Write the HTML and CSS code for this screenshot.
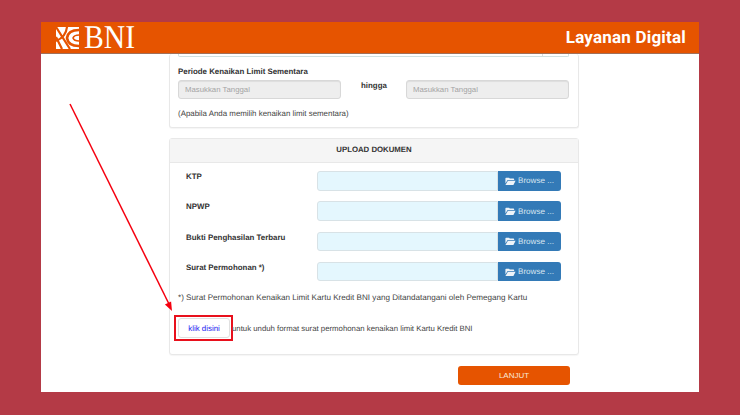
FILE: index.html
```html
<!DOCTYPE html>
<html lang="id">
<head>
<meta charset="utf-8">
<title>BNI Layanan Digital</title>
<link rel="stylesheet" href="styles.css">
</head>
<body>
<main class="window">
  <header class="topbar">
    <div class="brand">
      <svg class="logo" width="23" height="22" viewBox="0 0 23 22" aria-hidden="true">
        <rect width="23" height="22" fill="#fff"/>
        <path d="M0 0 L14 22 M11 0 Q10 10 0 14 M0 10 L6 22" fill="none" stroke="#e65400" stroke-width="2.2"/>
        <path d="M23 3 Q12 3 11 11 Q12 19 23 19" fill="none" stroke="#e65400" stroke-width="2.6"/>
        <path d="M23 8 Q18 8 17 11 Q18 14 23 14" fill="none" stroke="#e65400" stroke-width="1.6"/>
      </svg>
      <span class="wordmark">BNI</span>
    </div>
    <div class="title">Layanan Digital</div>
  </header>
  <div class="content">
    <section class="panel panel-top">
      <div class="stub"><span class="stub-end"></span></div>
      <div class="label period-label">Periode Kenaikan Limit Sementara</div>
      <div class="date-row">
        <input class="date" placeholder="Masukkan Tanggal" disabled>
        <span class="label until">hingga</span>
        <input class="date" placeholder="Masukkan Tanggal" disabled>
      </div>
      <p class="hint">(Apabila Anda memilih kenaikan limit sementara)</p>
    </section>
    <section class="panel panel-upload">
      <div class="panel-head">UPLOAD DOKUMEN</div>
      <div class="panel-body">
        <div class="file-row">
          <span class="label">KTP</span>
          <div class="file"><span class="file-input"></span><span class="browse"><svg class="folder" width="11" height="8" viewBox="0 0 14 11"><path d="M0 2 Q0 1 1 1 H5 L6 2 H11 Q12 2 12 3 V4 H3 L0 9 Z M3.500 5 H14 L11 11 H0 Z" fill="#eef3f8"/></svg>Browse ...</span></div>
        </div>
        <div class="file-row">
          <span class="label">NPWP</span>
          <div class="file"><span class="file-input"></span><span class="browse"><svg class="folder" width="11" height="8" viewBox="0 0 14 11"><path d="M0 2 Q0 1 1 1 H5 L6 2 H11 Q12 2 12 3 V4 H3 L0 9 Z M3.500 5 H14 L11 11 H0 Z" fill="#eef3f8"/></svg>Browse ...</span></div>
        </div>
        <div class="file-row">
          <span class="label">Bukti Penghasilan Terbaru</span>
          <div class="file"><span class="file-input"></span><span class="browse"><svg class="folder" width="11" height="8" viewBox="0 0 14 11"><path d="M0 2 Q0 1 1 1 H5 L6 2 H11 Q12 2 12 3 V4 H3 L0 9 Z M3.500 5 H14 L11 11 H0 Z" fill="#eef3f8"/></svg>Browse ...</span></div>
        </div>
        <div class="file-row">
          <span class="label">Surat Permohonan *)</span>
          <div class="file"><span class="file-input"></span><span class="browse"><svg class="folder" width="11" height="8" viewBox="0 0 14 11"><path d="M0 2 Q0 1 1 1 H5 L6 2 H11 Q12 2 12 3 V4 H3 L0 9 Z M3.500 5 H14 L11 11 H0 Z" fill="#eef3f8"/></svg>Browse ...</span></div>
        </div>
        <p class="note">*) Surat Permohonan Kenaikan Limit Kartu Kredit BNI yang Ditandatangani oleh Pemegang Kartu</p>
        <div class="download">
          <span class="red-box"><a class="klik">klik disini</a></span>
          <span class="download-text">untuk unduh format surat permohonan kenaikan limit Kartu Kredit BNI</span>
        </div>
      </div>
    </section>
    <div class="actions"><button class="next">LANJUT</button></div>
  </div>
  <svg class="arrow" width="120" height="220" viewBox="0 0 120 220" aria-hidden="true">
    <path d="M1 1 L100 201" stroke="#f5000f" stroke-width="1.5" fill="none"/>
    <path d="M103 208 L95.900 201.500 L102.100 198.500 Z" fill="#f5000f"/>
  </svg>
</main>
</body>
</html>
```
FILE: styles.css
```css
* { box-sizing: border-box; }
html, body { margin: 0; height: 100%; }
body {
  background: #b43a46;
  padding: 22px 41px 23px;
  font-family: "Liberation Sans", Arial, sans-serif;
  text-rendering: geometricPrecision;
  overflow: hidden;
}
.window {
  position: relative;
  width: 658px;
  height: 370px;
  background: #fff;
}
.topbar {
  height: 32px;
  background: #e65400;
  border-bottom: 1px solid #a0705a;
  display: flex;
  align-items: center;
  justify-content: space-between;
  padding: 0 13px 0 15px;
  position: relative;
  z-index: 1;
}
.brand { display: flex; align-items: center; gap: 5px; }
.logo { display: block; }
.wordmark {
  font-family: "Liberation Serif", serif;
  color: #fff;
  font-size: 26px;
  line-height: 31px;
  transform: scale(1.14, 1.28);
  transform-origin: left center;
}
.title {
  color: #fff;
  font-family: Roboto, sans-serif;
  font-weight: 700;
  font-size: 17px;
  letter-spacing: 0.2px;
}
.content {
  width: 410px;
  margin-left: 128px;
  display: flex;
  flex-direction: column;
}
.panel {
  background: #fff;
  border: 1px solid #e8e8e8;
  border-radius: 3px;
  box-shadow: 0 1px 1px rgba(0,0,0,.04);
}
.panel-top {
  height: 74px;
  border-top: 0;
  padding: 0 9px 0 8px;
}
.stub {
  height: 3px;
  border: 1px solid #cfe0e0;
  border-top: 0;
  border-radius: 0 0 2px 2px;
  display: flex;
  justify-content: flex-end;
}
.stub-end { width: 26px; border-left: 1px solid #ddd; }
.label {
  font-size: 7.900px;
  font-weight: 700;
  color: #333;
}
.period-label { margin-top: 9px; line-height: 11px; }
.date-row {
  margin-top: 3px;
  display: flex;
  align-items: center;
}
.date {
  width: 163px;
  height: 19px;
  border: 1px solid #d8d8d8;
  border-radius: 3px;
  background: #eee;
  padding: 0 6px;
  font: 7.800px "Liberation Sans", Arial, sans-serif;
  box-shadow: inset 0 1px 1px rgba(0,0,0,.07);
}
.date::placeholder { color: #a4a4a4; opacity: 1; }
.until { width: 65px; padding-left: 20px; margin-top: -9px; }
.hint {
  margin: 9px 0 0;
  font-size: 7.900px;
  line-height: 11px;
  color: #444;
}
.panel-upload { margin-top: 10px; height: 217px; }
.panel-head {
  height: 24px;
  padding-bottom: 2px;
  background: #f5f5f5;
  border-bottom: 1px solid #e8e8e8;
  display: flex;
  align-items: center;
  justify-content: center;
  font-size: 7.800px;
  font-weight: 700;
  color: #333;
}
.panel-body { padding: 8px 8px 0; }
.file-row {
  height: 30.330px;
  display: flex;
  align-items: flex-start;
  padding-left: 8px;
}
.file-row .label { width: 131px; line-height: 11px; }
.file { display: flex; width: 244px; height: 19.500px; }
.file-input {
  flex: 1;
  background: #e4f7fe;
  border: 1px solid #d8e2e6;
  border-radius: 3px 0 0 3px;
}
.browse {
  width: 63px;
  background: #337ab7;
  border-radius: 0 3px 3px 0;
  color: #dbe6f0;
  font-size: 8.100px;
  display: flex;
  align-items: center;
  justify-content: center;
  gap: 2px;
}
.folder { display: block; }
.note {
  margin: 0;
  font-size: 8.100px;
  line-height: 11px;
  color: #444;
  white-space: nowrap;
}
.download {
  margin-top: 12px;
  margin-left: -4px;
  display: flex;
  align-items: center;
}
.red-box {
  width: 59px;
  height: 26px;
  border: 2px solid #e8101c;
  padding: 1px 1px 1px 2px;
  flex: none;
  display: flex;
}
.klik {
  flex: 1;
  background: #fff;
  border: 1px solid #e0e0e0;
  border-radius: 3px;
  color: #2020f0;
  font-size: 7.900px;
  display: flex;
  align-items: center;
  justify-content: center;
}
.download-text { font-size: 7.800px; color: #444; margin-left: -1px; }
.actions { display: flex; justify-content: flex-end; margin-top: 11px; padding-right: 9px; }
.next {
  width: 112px;
  height: 19px;
  background: #e65400;
  color: #f8e8d8;
  border: 0;
  border-radius: 3px;
  font: 8px "Liberation Sans", Arial, sans-serif;
  padding: 0;
}
.arrow { position: absolute; left: 28px; top: 81px; }
```
